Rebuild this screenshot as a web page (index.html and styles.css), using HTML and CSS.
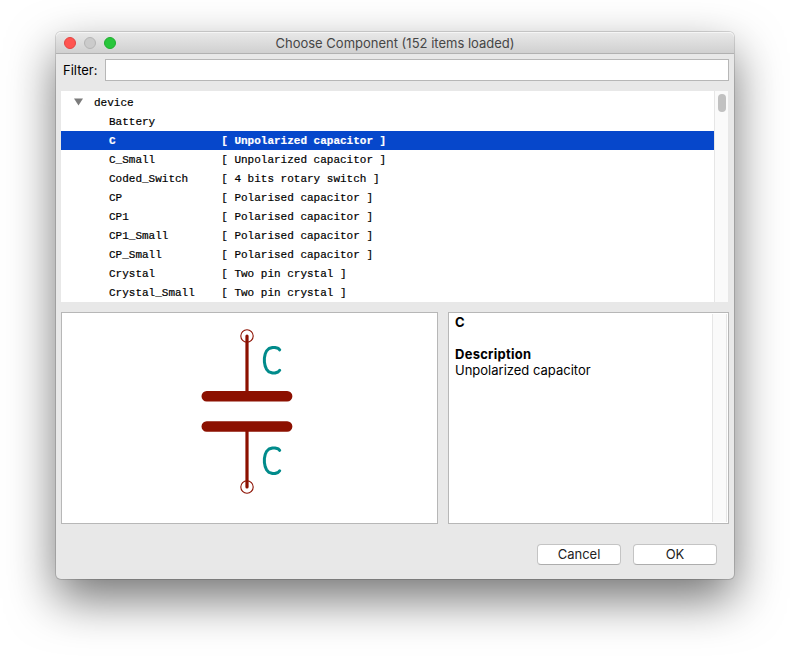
FILE: index.html
```html
<!DOCTYPE html>
<html lang="en">
<head>
<meta charset="utf-8">
<title>Choose Component</title>
<link rel="stylesheet" href="styles.css">
</head>
<body>
<main class="window">
  <header class="titlebar">
    <div class="lights"><i class="light close"></i><i class="light minimize"></i><i class="light zoom"></i></div>
    <h1 class="title">Choose Component (152 items loaded)</h1>
  </header>
  <div class="filter">
    <label class="filter-label" for="filter">Filter:</label>
    <input class="filter-input" id="filter" type="text">
  </div>
  <section class="list">
    <div class="rows">
      <div class="row group"><svg class="arrow" width="10" height="8" viewBox="0 0 10 8"><path d="M0 0.4H9L4.5 7.6Z" fill="#7b7b7b"/></svg><span>device</span></div>
      <div class="row"><span class="name">Battery</span></div>
      <div class="row selected"><span class="name">C</span><span>[ Unpolarized capacitor ]</span></div>
      <div class="row"><span class="name">C_Small</span><span>[ Unpolarized capacitor ]</span></div>
      <div class="row"><span class="name">Coded_Switch</span><span>[ 4 bits rotary switch ]</span></div>
      <div class="row"><span class="name">CP</span><span>[ Polarised capacitor ]</span></div>
      <div class="row"><span class="name">CP1</span><span>[ Polarised capacitor ]</span></div>
      <div class="row"><span class="name">CP1_Small</span><span>[ Polarised capacitor ]</span></div>
      <div class="row"><span class="name">CP_Small</span><span>[ Polarised capacitor ]</span></div>
      <div class="row"><span class="name">Crystal</span><span>[ Two pin crystal ]</span></div>
      <div class="row"><span class="name">Crystal_Small</span><span>[ Two pin crystal ]</span></div>
    </div>
    <div class="scrollbar"><div class="thumb"></div></div>
  </section>
  <section class="panels">
    <div class="preview">
      <svg width="375" height="210" viewBox="62 313 375 210" fill="none" stroke-linecap="round">
        <g stroke="#8c1000">
          <path d="M247 336V396M247 427V487" stroke-width="3.2"/>
          <path d="M206.7 396.3H287.2M206.7 426.5H287.2" stroke-width="10.4"/>
          <circle cx="247" cy="336" r="6.2" stroke-width="1.1"/>
          <circle cx="247" cy="487" r="6.2" stroke-width="1.1"/>
        </g>
        <g stroke="#008b8b" stroke-width="3" stroke-linejoin="round">
          <path d="M279.7 349.8L278 348.2L275 347.5H272.5L269 348.5L266.5 351L265.2 354L264.4 358V362L265.2 366.2L266.5 369.2L269 371.9L272.5 373H275L278 372L279.7 370.3"/>
          <path d="M279.7 450.3L278 448.7L275 448H272.5L269 449L266.5 451.5L265.2 454.5L264.4 458.5V462.5L265.2 466.7L266.5 469.7L269 472.4L272.5 473.5H275L278 472.5L279.7 470.8"/>
        </g>
      </svg>
    </div>
    <div class="details">
      <div class="text">
        <h2>C</h2>
        <h3>Description</h3>
        <p>Unpolarized capacitor</p>
      </div>
      <div class="track"></div>
    </div>
  </section>
  <footer class="actions">
    <button class="button cancel">Cancel</button>
    <button class="button ok">OK</button>
  </footer>
</main>
</body>
</html>
```
FILE: styles.css
```css
* { box-sizing: border-box; }
body {
  margin: 0;
  width: 790px;
  height: 659px;
  overflow: hidden;
  padding: 32px 56px;
  background: #fff;
  color: #000;
  font: 13px/16px Inter, "Liberation Sans", sans-serif;
}
.window {
  width: 678px;
  height: 547px;
  background: #e8e8e8;
  border-radius: 5px;
  box-shadow: 0 0 0 1px rgba(0, 0, 0, .14), 0 20px 48px rgba(0, 0, 0, .55);
  display: flex;
  flex-direction: column;
}
.titlebar {
  height: 22px;
  display: grid;
  grid-template-columns: 60px 1fr 60px;
  align-items: center;
  padding-left: 8px;
  padding-right: 8px;
  border-bottom: 1px solid #b1b1b1;
  border-radius: 5px 5px 0 0;
  background: linear-gradient(#e9e9e9, #d0d0d0);
  box-shadow: inset 0 1px #f5f5f5;
}
.lights { display: flex; gap: 8px; }
.light { width: 12px; height: 12px; border-radius: 50%; border: 1px solid; }
.close { background: #ff5450; border-color: #e24542; }
.minimize { background: #cbcbcb; border-color: #b5b5b5; }
.zoom { background: #28c63b; border-color: #1fae2e; }
.title { margin: 0; font-size: 13px; font-weight: 400; color: #464646; text-align: center; white-space: nowrap; }
.filter { display: flex; align-items: center; height: 22px; margin: 5px 5px 10px 7px; }
.filter-label { width: 42px; }
.filter-input { flex: 1; height: 22px; border: 1px solid #b7b7b7; background: #fff; padding: 0 4px; outline: 0; }
.list { display: flex; height: 211px; margin: 0 6px 10px 5px; background: #fff; }
.rows {
  flex: 1;
  padding-top: 2px;
  font: 11px/21px "Liberation Mono", monospace;
  -webkit-text-stroke: .2px;
}
.row { height: 19px; padding-left: 48px; display: flex; white-space: pre; }
.name { width: 112.2px; }
.group { padding-left: 13px; gap: 10px; }
.arrow { margin-top: 5px; }
.selected { background: #0647cb; color: #fff; font-weight: 700; }
.scrollbar { width: 14px; border-left: 1px solid #e6e6e6; background: #fafafa; padding: 3px 0 0 3px; }
.thumb { width: 8px; height: 18px; border-radius: 4px; background: #c1c1c1; }
.panels { display: grid; grid-template-columns: 377px 281px; gap: 10px; height: 212px; margin-left: 5px; }
.preview, .details { border: 1px solid #b7b7b7; background: #fff; }
.preview svg { display: block; }
.details { display: flex; padding: 1px; }
.text { flex: 1; padding-left: 5px; }
.text h2, .text h3, .text p { margin: 0; font-size: 13px; line-height: 16px; }
.text h2 { margin-bottom: 16px; }
.text h3 { letter-spacing: .25px; }
.track { width: 15px; border: solid #e6e6e6; border-width: 0 1px; background: #fafafa; }
.actions { display: flex; justify-content: flex-end; gap: 12px; padding: 20px 17px 0 0; }
.button {
  width: 84px;
  height: 21px;
  padding: 0 0 2px;
  border: 1px solid #c4c4c4;
  border-bottom-color: #adadad;
  border-radius: 4px;
  background: #fff;
  color: #222;
  font: 13px/16px Inter, "Liberation Sans", sans-serif;
}
```
